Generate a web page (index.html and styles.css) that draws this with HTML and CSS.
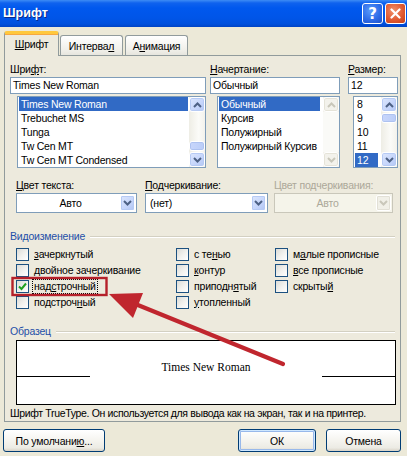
FILE: index.html
```html
<!DOCTYPE html>
<html lang="ru">
<head>
<meta charset="utf-8">
<title>Шрифт</title>
<link rel="stylesheet" href="styles.css">
</head>
<body>
<div class="window">
  <div class="titlebar">
    <span class="title">Шрифт</span>
    <div class="tb-btns">
      <span class="tb-btn help">?</span>
      <span class="tb-btn close"><svg width="11" height="11" viewBox="0 0 11 11"><path d="M1.5 1.5 L9.5 9.5 M9.5 1.5 L1.5 9.5" stroke="#fff" stroke-width="2.2" stroke-linecap="round"/></svg></span>
    </div>
  </div>
  <div class="client">
    <div class="tabs">
      <div class="tab active"><u>Ш</u>рифт</div>
      <div class="tab">Интерва<u>л</u></div>
      <div class="tab">А<u>н</u>имация</div>
    </div>
    <div class="panel">
      <div class="font-row">
        <div class="fcol c-font">
          <div class="lbl">Шри<u>ф</u>т:</div>
          <div class="edit">Times New Roman</div>
          <div class="list">
            <div class="items">
              <div class="item sel">Times New Roman</div>
              <div class="item">Trebuchet MS</div>
              <div class="item">Tunga</div>
              <div class="item">Tw Cen MT</div>
              <div class="item">Tw Cen MT Condensed</div>
            </div>
            <div class="sb">
              <div class="sb-btn"><svg width="9" height="6" viewBox="0 0 9 6"><path d="M1 5 L4.5 1.5 L8 5" fill="none" stroke="#4D6185" stroke-width="2"/></svg></div>
              <div class="sb-track"><div class="sb-thumb t-font"></div></div>
              <div class="sb-btn"><svg width="9" height="6" viewBox="0 0 9 6"><path d="M1 1 L4.5 4.5 L8 1" fill="none" stroke="#4D6185" stroke-width="2"/></svg></div>
            </div>
          </div>
        </div>
        <div class="fcol c-style">
          <div class="lbl"><u>Н</u>ачертание:</div>
          <div class="edit">Обычный</div>
          <div class="list">
            <div class="items">
              <div class="item sel">Обычный</div>
              <div class="item">Курсив</div>
              <div class="item">Полужирный</div>
              <div class="item">Полужирный Курсив</div>
            </div>
            <div class="sb disabled">
              <div class="sb-btn"><svg width="9" height="6" viewBox="0 0 9 6"><path d="M1 5 L4.5 1.5 L8 5" fill="none" stroke="#C9C7BA" stroke-width="2"/></svg></div>
              <div class="sb-track"></div>
              <div class="sb-btn"><svg width="9" height="6" viewBox="0 0 9 6"><path d="M1 1 L4.5 4.5 L8 1" fill="none" stroke="#C9C7BA" stroke-width="2"/></svg></div>
            </div>
          </div>
        </div>
        <div class="fcol c-size">
          <div class="lbl"><u>Р</u>азмер:</div>
          <div class="edit">12</div>
          <div class="list">
            <div class="items">
              <div class="item">8</div>
              <div class="item">9</div>
              <div class="item">10</div>
              <div class="item">11</div>
              <div class="item sel">12</div>
            </div>
            <div class="sb">
              <div class="sb-btn"><svg width="9" height="6" viewBox="0 0 9 6"><path d="M1 5 L4.5 1.5 L8 5" fill="none" stroke="#4D6185" stroke-width="2"/></svg></div>
              <div class="sb-track"><div class="sb-thumb t-size"></div></div>
              <div class="sb-btn"><svg width="9" height="6" viewBox="0 0 9 6"><path d="M1 1 L4.5 4.5 L8 1" fill="none" stroke="#4D6185" stroke-width="2"/></svg></div>
            </div>
          </div>
        </div>
      </div>

      <div class="combo-row">
        <div class="ccol cc1">
          <div class="lbl"><u>Ц</u>вет текста:</div>
          <div class="combo"><span class="cval center">Авто</span><span class="cbtn"><svg width="9" height="6" viewBox="0 0 9 6"><path d="M1 1 L4.5 4.5 L8 1" fill="none" stroke="#4D6185" stroke-width="2"/></svg></span></div>
        </div>
        <div class="ccol cc2">
          <div class="lbl"><u>П</u>одчеркивание:</div>
          <div class="combo"><span class="cval">(нет)</span><span class="cbtn"><svg width="9" height="6" viewBox="0 0 9 6"><path d="M1 1 L4.5 4.5 L8 1" fill="none" stroke="#4D6185" stroke-width="2"/></svg></span></div>
        </div>
        <div class="ccol cc3">
          <div class="lbl dis">Цвет подчеркивания:</div>
          <div class="combo disabled"><span class="cval center">Авто</span><span class="cbtn"><svg width="9" height="6" viewBox="0 0 9 6"><path d="M1 1 L4.5 4.5 L8 1" fill="none" stroke="#C9C7BA" stroke-width="2"/></svg></span></div>
        </div>
      </div>

      <div class="group g-effects">
        <div class="ghead"><span class="gtitle">Видоизменение</span><span class="gline"></span></div>
        <div class="checks">
          <div class="chk"><span class="box"></span><span class="ctext"><u>з</u>ачеркнутый</span></div>
          <div class="chk"><span class="box"></span><span class="ctext">с те<u>н</u>ью</span></div>
          <div class="chk"><span class="box"></span><span class="ctext">м<u>а</u>лые прописные</span></div>
          <div class="chk"><span class="box"></span><span class="ctext"><u>д</u>войное зачеркивание</span></div>
          <div class="chk"><span class="box"></span><span class="ctext"><u>к</u>онтур</span></div>
          <div class="chk"><span class="box"></span><span class="ctext"><u>в</u>се прописные</span></div>
          <div class="chk"><span class="box checked"><svg width="9" height="9" viewBox="0 0 9 9"><path d="M1 4.5 L3.5 7 L8 1.5" fill="none" stroke="#21A121" stroke-width="2"/></svg></span><span class="ctext focus">над<u>с</u>трочный</span></div>
          <div class="chk"><span class="box"></span><span class="ctext">приподн<u>я</u>тый</span></div>
          <div class="chk"><span class="box"></span><span class="ctext">скрыты<u>й</u></span></div>
          <div class="chk"><span class="box"></span><span class="ctext">подстроч<u>н</u>ый</span></div>
          <div class="chk"><span class="box"></span><span class="ctext"><u>у</u>топленный</span></div>
          <div class="chk empty"></div>
        </div>
      </div>

      <div class="group g-sample">
        <div class="ghead"><span class="gtitle">Образец</span><span class="gline"></span></div>
        <div class="preview">
          <span class="pline"></span>
          <span class="ptext">Times New Roman</span>
          <span class="pline"></span>
        </div>
      </div>

      <div class="note">Шрифт TrueType. Он используется для вывода как на экран, так и на принтер.</div>
    </div>

    <div class="buttons">
      <div class="btn b-default">По умолчани<u>ю</u>...</div>
      <div class="spacer"></div>
      <div class="btn b-ok">ОК</div>
      <div class="btn b-cancel">Отмена</div>
    </div>
  </div>

  <svg class="annot" width="407" height="456" viewBox="0 0 407 456">
    <rect x="12.5" y="278" width="94" height="17" fill="none" stroke="#B5202A" stroke-width="2.4"/>
    <path d="M283 364 L128 301" stroke="#C0262E" stroke-width="4.2" stroke-linecap="round"/>
    <polygon points="109,294 143,293 133,318" fill="#C0262E"/>
  </svg>
</div>
</body>
</html>
```

FILE: styles.css
```css
* { box-sizing: border-box; }
html, body { margin: 0; padding: 0; }
body {
  width: 407px;
  height: 456px;
  overflow: hidden;
  background: #ECE9D8;
  font-family: "Liberation Sans", Arial, sans-serif;
  font-size: 10.5px;
  letter-spacing: -0.2px;
  color: #000;
}
u { text-decoration: underline; text-underline-offset: 1px; }

.window { position: relative; width: 407px; height: 456px; background: #ECE9D8; }

/* title bar */
.titlebar {
  height: 27px;
  display: flex;
  justify-content: space-between;
  align-items: flex-start;
  padding: 0 1px 0 3px;
  background: linear-gradient(to bottom, #3D8CF5 0px, #0F62EE 3px, #0058EE 8px, #0055E8 18px, #0050DD 24px, #0043C4 27px);
}
.title {
  color: #fff;
  font-weight: bold;
  font-size: 12.5px;
  letter-spacing: 0;
  line-height: 27px;
  text-shadow: 1px 1px 0 #0A2A8A;
}
.tb-btns { display: flex; gap: 2px; margin-top: 3px; }
.tb-btn {
  width: 21px; height: 21px;
  border: 1px solid #fff;
  border-radius: 3px;
  display: flex; align-items: center; justify-content: center;
}
.help {
  background: radial-gradient(circle at 40% 35%, #5A9BFB 0%, #2F6DE8 55%, #1D50C8 100%);
  color: #fff; font-weight: bold; font-size: 15px;
  letter-spacing: 0;
  font-family: "DejaVu Sans", sans-serif;
}
.close {
  background: radial-gradient(circle at 40% 35%, #F0916C 0%, #E15A32 55%, #C23E18 100%);
}

/* client area */
.client { padding: 0 6px 0 4px; }

.tabs {
  position: relative; z-index: 1;
  display: flex; align-items: flex-end;
  height: 24px; margin-top: 4px;
}
.tab {
  height: 20px;
  border: 1px solid #919B9C;
  border-bottom: none;
  border-radius: 3px 3px 0 0;
  background: linear-gradient(to bottom, #FFFFFF, #F1F0EA 70%, #E6E5DE);
  display: flex; align-items: center; justify-content: center;
  width: 63px;
  margin-right: 2px;
}
.tab.active {
  width: 55px;
  height: 25px;
  margin-bottom: -1px;
  margin-right: 1px;
  border-top: 3px solid #FFC83C;
  box-shadow: inset 0 1px 0 #F7A840;
  background: #EDEADD;
  padding-bottom: 2px;
}

.panel {
  position: relative;
  height: 367px;
  border: 1px solid #919B9C;
  background: #EDEADD;
  padding: 7px 0 0 5px;
}

.lbl { height: 13px; line-height: 13px; white-space: nowrap; }
.lbl.dis { color: #ACA899; }

/* font/style/size lists */
.font-row { display: flex; }
.fcol { display: flex; flex-direction: column; }
.c-font { width: 196px; }
.c-style { width: 130px; margin-left: 4px; }
.c-size { width: 50px; margin-left: 8px; }

.edit {
  margin-top: 1px;
  height: 17px;
  border: 1px solid #7F9DB9;
  background: #fff;
  line-height: 15px;
  padding-left: 2px;
  white-space: nowrap;
}
.list {
  margin-top: 2px;
  margin-left: 7px;
  height: 72px;
  border: 1px solid #7F9DB9;
  background: #fff;
  display: flex;
}
.c-size .list { margin-left: 5px; }
.items { flex: 1; padding: 0 1px; overflow: hidden; }
.item {
  height: 14px; line-height: 14px;
  padding-left: 2px;
  white-space: nowrap;
}
.item.sel { background: #316AC5; color: #fff; }
.c-size .item.sel { width: 23px; }
.c-style .item.sel { margin-right: 2px; }

.sb {
  width: 16px;
  display: flex; flex-direction: column;
  background: #F3F2EC;
}
.sb-btn {
  height: 15px;
  border: 1px solid #fff;
  border-radius: 3px;
  background: linear-gradient(135deg, #DDE7FD 0%, #C5D5FB 60%, #B3C6F3 100%);
  box-shadow: inset 0 0 0 1px #B6CAF4;
  display: flex; align-items: center; justify-content: center;
}
.sb-track {
  flex: 1;
  background: linear-gradient(to right, #EEEDE5, #FBFBF8 60%, #F3F2EC);
}
.sb-thumb {
  height: 10px;
  border: 1px solid #fff;
  border-radius: 3px;
  background: linear-gradient(to right, #C8D6FB, #BACDF8);
  box-shadow: inset 0 0 0 1px #AEC2F0;
}
.t-font { margin-top: 29px; }
.t-size { margin-top: 1px; }
.sb.disabled .sb-btn {
  background: #F3F2EC;
  box-shadow: inset 0 0 0 1px #E5E3D8;
}
.sb.disabled .sb-track { background: #FAFAF7; }

/* combos */
.combo-row { display: flex; margin-top: 11px; margin-left: 6px; }
.ccol { display: flex; flex-direction: column; }
.cc1 { width: 121px; }
.cc2 { width: 123px; margin-left: 8px; }
.cc3 { width: 119px; margin-left: 6px; }
.combo {
  margin-top: 1px;
  height: 20px;
  border: 1px solid #7F9DB9;
  background: #fff;
  display: flex; align-items: stretch;
  padding: 1px;
}
.cval { flex: 1; line-height: 16px; padding-left: 3px; white-space: nowrap; }
.cval.center { text-align: center; }
.cbtn {
  width: 15px;
  border: 1px solid #fff;
  border-radius: 2px;
  background: linear-gradient(135deg, #DDE7FD 0%, #C5D5FB 60%, #AFC3F2 100%);
  box-shadow: inset 0 0 0 1px #B6CAF4;
  display: flex; align-items: center; justify-content: center;
}
.combo.disabled { border-color: #C9C7BA; background: #F5F4EA; color: #ACA899; }
.combo.disabled .cbtn { background: #F1F0E8; box-shadow: inset 0 0 0 1px #E2E0D6; }

/* groups */
.ghead { display: flex; align-items: center; height: 13px; }
.gtitle { color: #1E4FA8; line-height: 13px; white-space: nowrap; }
.gline {
  flex: 1; height: 2px; margin-left: 5px; margin-right: 5px;
  border-top: 1px solid #D3D0C2;
  border-bottom: 1px solid #FFFFFF;
}
.g-effects { margin-top: 17px; }
.checks {
  margin-top: 3px;
  margin-left: 6px;
  display: grid;
  grid-template-columns: 160px 99px 1fr;
  grid-auto-rows: 16px;
}
.chk { display: flex; align-items: center; white-space: nowrap; }
.box {
  width: 13px; height: 13px;
  border: 1px solid #1C5180;
  background: linear-gradient(135deg, #DCDCD7 0%, #F2F2EF 55%, #FFFFFF 100%);
  margin-right: 3px;
  display: flex; align-items: center; justify-content: center;
  flex: none;
}
.ctext { line-height: 13px; padding: 0 1px; border: 1px solid transparent; }
.ctext.focus { border: 1px dotted #000; }

.g-sample { margin-top: 15px; }
.preview {
  margin-top: 2px;
  margin-left: 6px;
  width: 380px;
  height: 65px;
  border: 1px solid #000;
  background: #fff;
  display: flex;
  align-items: flex-start;
}
.pline {
  width: 73px; height: 36px;
  border-bottom: 1px solid #000;
  flex: none;
}
.ptext {
  flex: 1;
  text-align: center;
  font-family: "Liberation Serif", "Times New Roman", serif;
  font-size: 11.5px;
  letter-spacing: 0;
  line-height: 16px;
  margin-top: 18px;
}

.note { margin-top: 2px; height: 13px; line-height: 13px; white-space: nowrap; letter-spacing: -0.35px; }

/* buttons */
.buttons { display: flex; margin-top: 7px; margin-left: -1px; }
.spacer { flex: 1; }
.btn {
  height: 23px;
  border: 1px solid #003C74;
  border-radius: 3px;
  background: linear-gradient(to bottom, #FFFFFF 0%, #F5F4EF 50%, #ECEBE4 85%, #D8D2C6 100%);
  display: flex; align-items: center; justify-content: center;
  white-space: nowrap;
}
.b-default { width: 102px; }
.b-ok {
  width: 78px;
  box-shadow: inset 0 0 0 1px #CEE7FF, inset 0 0 0 2px #98B8EA;
}
.b-cancel { width: 75px; margin-left: 10px; }

.annot { position: absolute; left: 0; top: 0; pointer-events: none; }
```
